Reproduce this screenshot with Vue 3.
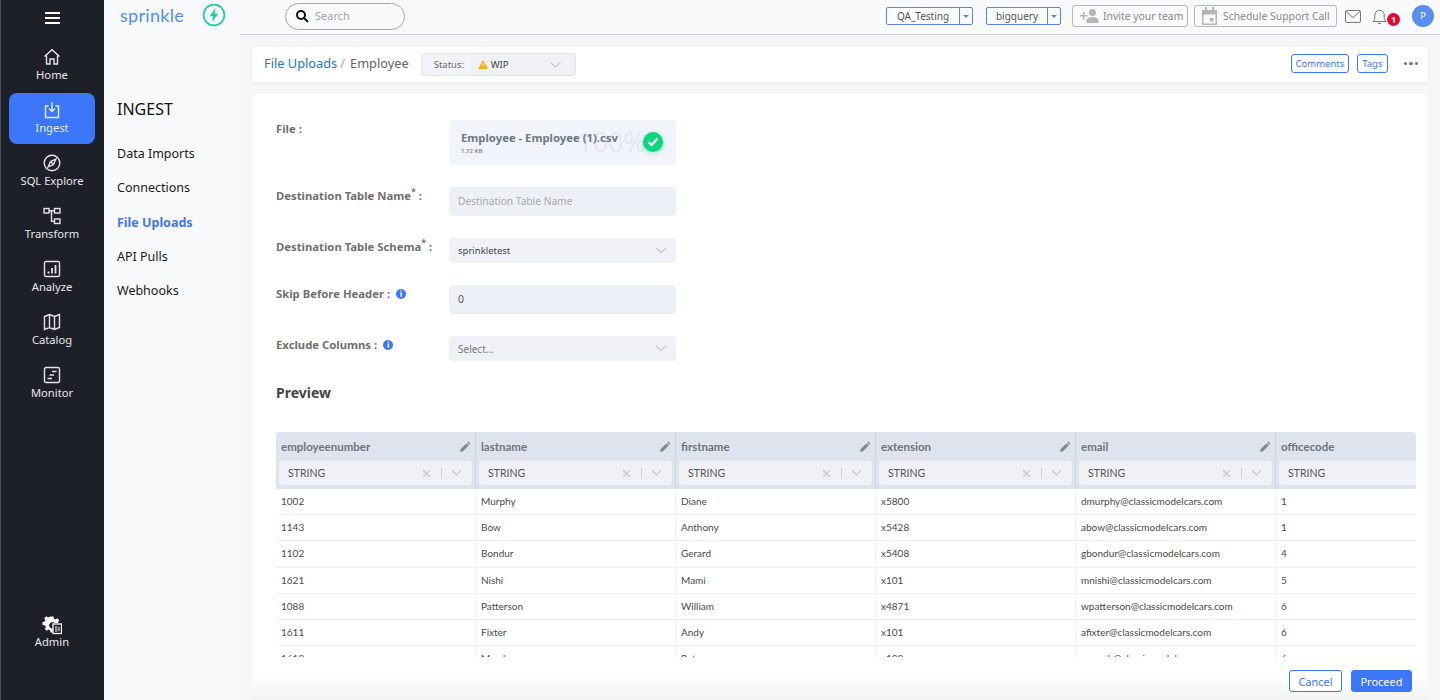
<template>
  <div class="app">
    <aside class="sidebar">
      <div class="burger"><span></span><span></span><span></span></div>
      <a v-for="item in navItems" :key="item.label" class="nav-item" :class="{ active: item.active }">
        <svg width="18" height="18" viewBox="0 0 18 18" fill="none" stroke="currentColor" stroke-width="1.4" v-html="item.icon"></svg>
        <span>{{ item.label }}</span>
      </a>
      <a class="nav-item admin">
        <svg width="20" height="20" viewBox="0 0 20 20">
          <path fill="#fff" d="M8 1h3l.4 2.2 1.5.7 1.9-1.2 2 2-1.2 1.8.3.9H12a3.2 3.2 0 1 0-2 5.600V17H8l-.4-2.200-1.500-.7-1.900 1.200-2-2 1.200-1.900-.6-1.500L0 9.500v-3l2.300-.4.6-1.500-1.200-1.900 2-2 1.900 1.200 1.500-.6z" transform="translate(0.500 0.500)"/>
          <rect x="11" y="9" width="8.500" height="9.500" fill="#1e2029" stroke="#fff" stroke-width="1.300"/>
          <path stroke="#fff" stroke-width="1" d="M13 12h2.500M13 14h2.500M13 16h2.500M17 12v4"/>
        </svg>
        <span>Admin</span>
      </a>
    </aside>

    <nav class="subnav">
      <div class="logo">
        <span class="wordmark">sprinkle</span>
        <svg width="24" height="24" viewBox="0 0 24 24" fill="none">
          <circle cx="12" cy="12" r="10.400" stroke="#1ccfa0" stroke-width="1.700"/>
          <path fill="#1ccfa0" d="M13.600 4.800 7.800 13.200h3.400l-1 6 5.900-8.600h-3.500z"/>
        </svg>
      </div>
      <h2>INGEST</h2>
      <a v-for="link in subLinks" :key="link" :class="{ current: link === 'File Uploads' }">{{ link }}</a>
    </nav>

    <div class="main">
      <header class="topbar">
        <div class="search">
          <svg width="14" height="14" viewBox="0 0 14 14" fill="none" stroke="#111" stroke-width="2"><circle cx="6" cy="6" r="4"/><path d="m9 9 4 4"/></svg>
          <span>Search</span>
        </div>
        <div class="top-right">
          <div class="split qa"><span>QA_Testing</span><i></i></div>
          <div class="split bq"><span>bigquery</span><i></i></div>
          <div class="ghost invite">
            <svg width="20" height="14" viewBox="0 0 20 14" fill="#b5b5b5"><path d="M3 6V3h1.500v3h3v1.500h-3v3H3v-3H0V6z"/><circle cx="12.500" cy="3.500" r="3.500"/><path d="M6.500 14v-2c0-2.500 3-4 6-4s6 1.500 6 4v2z"/></svg>
            <span>Invite your team</span>
          </div>
          <div class="ghost schedule">
            <svg width="15" height="18" viewBox="0 0 15 18" fill="#b5b5b5"><path d="M0 3h3V0h2v3h5V0h2v3h3v15H0zm1.500 4.500V16.500h12V7.500z"/><rect x="8" y="11" width="3.500" height="3.500"/></svg>
            <span>Schedule Support Call</span>
          </div>
          <svg class="mail" width="16" height="13" viewBox="0 0 16 13" fill="none" stroke="#777" stroke-width="1"><rect x=".5" y=".5" width="15" height="12" rx="1.500"/><path d="m1 1.500 7 6 7-6"/></svg>
          <div class="bell">
            <svg width="15" height="17" viewBox="0 0 15 17" fill="none" stroke="#777" stroke-width="1"><path d="M1 13.500c1.200-1 1.800-2 1.800-4.500V7a4.700 4.700 0 0 1 9.400 0v2c0 2.500.6 3.500 1.800 4.500zM6 15.500h3"/></svg>
            <b>1</b>
          </div>
          <div class="avatar">P</div>
        </div>
      </header>

      <div class="content">
        <section class="crumbs">
          <a class="crumb-link">File Uploads</a>
          <span class="slash">/</span>
          <span class="crumb-now">Employee</span>
          <div class="status">
            <span class="status-label">Status:</span>
            <div class="status-value">
              <svg width="10" height="9" viewBox="0 0 10 9"><path fill="#f0b010" d="M5 0 10 9H0z"/><path stroke="#fff" stroke-width="1" d="M5 3v3M5 7v1"/></svg>
              <span>WIP</span>
              <svg class="chev" width="11" height="6" viewBox="0 0 11 6" fill="none" stroke="#c4c7cf" stroke-width="1.200"><path d="m.5.500 5 4.500 5-4.500"/></svg>
            </div>
          </div>
          <div class="crumb-actions">
            <button>Comments</button>
            <button>Tags</button>
            <span class="dots"><i></i><i></i><i></i></span>
          </div>
        </section>

        <section class="card">
          <div class="form">
            <div class="row">
              <label>File :</label>
              <div class="file-box">
                <span class="ghost-pct">100%</span>
                <div class="file-name">Employee - Employee (1).csv</div>
                <div class="file-size">1.72 KB</div>
                <span class="file-ok">
                  <svg width="12" height="10" viewBox="0 0 12 10" fill="none" stroke="#fff" stroke-width="2.400"><path d="m1.500 5 3 3 6-6.500"/></svg>
                </span>
              </div>
            </div>
            <div class="row">
              <label>Destination Table Name<sup>*</sup> :</label>
              <div class="field tall placeholder">Destination Table Name</div>
            </div>
            <div class="row">
              <label>Destination Table Schema<sup>*</sup> :</label>
              <div class="field select schema">
                <span>sprinkletest</span>
                <svg width="12" height="7" viewBox="0 0 12 7" fill="none" stroke="#c4c7cf" stroke-width="1.300"><path d="m1 1 5 4.500L11 1"/></svg>
              </div>
            </div>
            <div class="row">
              <label>Skip Before Header : <em class="info">i</em></label>
              <div class="field tall value">0</div>
            </div>
            <div class="row">
              <label>Exclude Columns : <em class="info">i</em></label>
              <div class="field select muted">
                <span>Select...</span>
                <svg width="12" height="7" viewBox="0 0 12 7" fill="none" stroke="#c4c7cf" stroke-width="1.300"><path d="m1 1 5 4.500L11 1"/></svg>
              </div>
            </div>
          </div>

          <h3>Preview</h3>

          <div class="table-wrap">
            <div class="thead">
              <div v-for="(col, i) in columns" :key="col" class="th">
                <div class="th-top">
                  <span>{{ col }}</span>
                  <svg v-if="i < 5" width="10" height="10" viewBox="0 0 10 10" fill="#888"><path d="M0 10l.7-3L6.500 1.200 8.800 3.500 3 9.300zM7.200.5 8 0a1 1 0 0 1 1.200 0l.8.8a1 1 0 0 1 0 1.200l-.6.700z"/></svg>
                </div>
                <div class="type-select">
                  <span>STRING</span>
                  <template v-if="i < 5">
                    <svg class="x" width="9" height="9" viewBox="0 0 9 9" stroke="#c9ccd4" stroke-width="1.500"><path d="m1 1 7 7M8 1 1 8"/></svg>
                    <i class="sep"></i>
                    <svg width="11" height="6" viewBox="0 0 11 6" fill="none" stroke="#c4c7cf" stroke-width="1.100"><path d="m1 .5 4.500 4.500L10 .5"/></svg>
                  </template>
                </div>
              </div>
            </div>
            <div v-for="row in rows" :key="row[0]" class="tr">
              <div v-for="(cell, j) in row" :key="j" class="td">{{ cell }}</div>
            </div>
          </div>

          <div class="footer">
            <button class="cancel">Cancel</button>
            <button class="proceed">Proceed</button>
          </div>
        </section>
      </div>
    </div>
  </div>
</template>

<script setup>
const navItems = [
  { label: 'Home', icon: '<path d="M1.500 8.500 9 1.800l7.500 6.700M3.500 7.500V16h3.500v-5h4v5h3.500V7.500"/>' },
  { label: 'Ingest', active: true, icon: '<path d="M5.500 5H2.500v11.500h13V5h-3M9 1v9M6 7.500 9 10.500l3-3"/>' },
  { label: 'SQL Explore', icon: '<circle cx="9" cy="9" r="7.800"/><path d="M12.800 5.200 10.500 10.500 5.200 12.800 7.500 7.500z"/><path d="M7.500 7.500 10.500 10.500" />' },
  { label: 'Transform', icon: '<rect x="1" y="1.500" width="5" height="4.500"/><rect x="11.500" y="1.500" width="5.500" height="4.500"/><rect x="11.500" y="12" width="5.500" height="4.500"/><path d="M6 3.700h5.500M8.500 3.700v10.500h3"/>' },
  { label: 'Analyze', icon: '<rect x="1.500" y="1.500" width="15" height="15" rx="1.500"/><path stroke-width="1.800" d="M5.500 13.500v-2M9 13.500V8M12.500 13.500V5"/>' },
  { label: 'Catalog', icon: '<path d="M1.500 3.500 6.500 1.500l5 2 5-2v13l-5 2-5-2-5 2zM6.500 1.500v13M11.500 3.500v13"/>' },
  { label: 'Monitor', icon: '<rect x="1.500" y="1.500" width="15" height="15" rx="1.500"/><path d="M9 5.500h4.500M6.500 9h4.500M4.500 12.500H9"/>' }
]

const subLinks = ['Data Imports', 'Connections', 'File Uploads', 'API Pulls', 'Webhooks']

const columns = ['employeenumber', 'lastname', 'firstname', 'extension', 'email', 'officecode']

const rows = [
  ['1002', 'Murphy', 'Diane', 'x5800', 'dmurphy@classicmodelcars.com', '1'],
  ['1143', 'Bow', 'Anthony', 'x5428', 'abow@classicmodelcars.com', '1'],
  ['1102', 'Bondur', 'Gerard', 'x5408', 'gbondur@classicmodelcars.com', '4'],
  ['1621', 'Nishi', 'Mami', 'x101', 'mnishi@classicmodelcars.com', '5'],
  ['1088', 'Patterson', 'William', 'x4871', 'wpatterson@classicmodelcars.com', '6'],
  ['1611', 'Fixter', 'Andy', 'x101', 'afixter@classicmodelcars.com', '6'],
  ['1612', 'Marsh', 'Peter', 'x102', 'pmarsh@classicmodelcars.com', '6']
]
</script>

<style>
html, body { margin: 0; height: 100%; overflow: hidden; }
</style>

<style scoped>
* { box-sizing: border-box; }

.app {
  display: flex;
  width: 1440px;
  height: 700px;
  overflow: hidden;
  font-family: "Noto Sans", "Open Sans", sans-serif;
  background: #f6f6f7;
}

/* sidebar */
.sidebar {
  width: 104px;
  flex-shrink: 0;
  display: flex;
  flex-direction: column;
  align-items: center;
  background: #1e2029;
  border-left: 1px solid #4a4c52;
}
.burger {
  display: flex;
  flex-direction: column;
  gap: 3px;
  width: 15px;
  margin: 12px 0 14px;
  height: 14px;
}
.burger span { height: 2px; background: #fff; }
.nav-item {
  width: 86px;
  height: 51px;
  margin: 0 0 2px -1px;
  display: flex;
  flex-direction: column;
  align-items: center;
  padding-top: 8px;
  color: #e8e6ec;
  font-size: 11.200px;
  line-height: 17px;
  border-radius: 8px;
}
.nav-item svg { display: block; color: #e4e1e8; }
.nav-item.active { background: #3b76fb; color: #e8eeff; }
.nav-item.active svg { color: #e8eeff; }
.nav-item.admin { margin-top: auto; margin-bottom: 45px; height: 48px; }
.nav-item.admin svg { margin-bottom: -2px; }

/* second column */
.subnav {
  width: 136px;
  flex-shrink: 0;
  padding: 0 0 0 13px;
  background: #f8f9fb;
  display: flex;
  flex-direction: column;
}
.logo {
  display: flex;
  align-items: center;
  height: 30px;
  margin: 0 0 0 3px;
}
.wordmark {
  width: 82px;
  font-family: Lato, sans-serif;
  font-size: 18px;
  letter-spacing: .3px;
  color: #4d8ef5;
  line-height: 30px;
}
.subnav h2 {
  margin: 67px 0 16px;
  font-size: 16px;
  line-height: 24px;
  font-weight: 400;
  color: #111;
}
.subnav a {
  height: 34.300px;
  line-height: 34px;
  font-size: 12.500px;
  color: #1a1a1a;
}
.subnav a.current { color: #3b76fb; font-weight: 700; }

/* top bar */
.main {
  flex: 1;
  min-width: 0;
  display: flex;
  flex-direction: column;
}
.topbar {
  height: 35px;
  flex-shrink: 0;
  display: flex;
  align-items: center;
  padding: 0 6px 2px 45px;
  background: #f8f9fb;
  border-bottom: 1px solid #d3d3d5;
}
.search {
  width: 120px;
  height: 27px;
  display: flex;
  align-items: center;
  gap: 6px;
  padding: 0 0 1px 9px;
  border: 1px solid #a8a8a8;
  border-radius: 14px;
  font-size: 11px;
  color: #a5a5a5;
}
.top-right {
  margin-left: auto;
  display: flex;
  align-items: center;
}
.split {
  height: 18px;
  display: flex;
  border: 1px solid #5b82e8;
  border-radius: 2px;
  font-size: 10px;
  line-height: 16px;
  color: #555;
  background: #fbfcfe;
}
.split span { flex: 1; text-align: center; }
.split i {
  width: 13px;
  border-left: 1px solid #5b82e8;
  position: relative;
}
.split i::after {
  content: "";
  position: absolute;
  left: 3px;
  top: 7px;
  border: 3px solid transparent;
  border-top: 3px solid #5b82e8;
  border-bottom: 0;
}
.qa { width: 87px; margin-right: 13px; }
.bq { width: 75px; margin-right: 11px; }
.ghost {
  height: 22px;
  display: flex;
  align-items: center;
  gap: 3px;
  padding-left: 7px;
  border: 1px solid #b5b5b5;
  border-radius: 3px;
  font-size: 10.400px;
  color: #8a8a8a;
  white-space: nowrap;
}
.invite { width: 116px; margin-right: 6px; }
.schedule { width: 143px; margin-right: 8px; gap: 6px; }
.mail { margin-right: 11px; }
.bell { position: relative; width: 18px; height: 20px; margin-right: 22px; padding-top: 2px; }
.bell b {
  position: absolute;
  left: 15px;
  top: 7px;
  width: 13px;
  height: 13px;
  border-radius: 50%;
  background: #e8062f;
  color: #fff;
  font-size: 9px;
  line-height: 13px;
  text-align: center;
}
.avatar {
  width: 22px;
  height: 22px;
  border-radius: 50%;
  background: #5b8def;
  color: #fff;
  font-size: 9px;
  line-height: 22px;
  text-align: center;
}

/* content */
.content {
  flex: 1;
  min-height: 0;
  display: flex;
  flex-direction: column;
  gap: 12px;
  padding: 12px 12px 0;
}
.crumbs {
  height: 35px;
  flex-shrink: 0;
  display: flex;
  align-items: center;
  padding: 0 10px 0 12px;
  background: #fff;
  box-shadow: 0 1px 3px rgba(0, 0, 0, .05);
  font-size: 12.800px;
}
.crumb-link { color: #2878b8; margin-bottom: 3px; }
.slash { color: #aaa; margin: 0 5px 3px 3px; }
.crumb-now { color: #666; margin-bottom: 3px; }
.status {
  width: 155px;
  height: 23px;
  margin-left: 12px;
  display: flex;
  align-items: center;
  border: 1px solid #e2e4ea;
  border-radius: 3px;
  background: #f2f3f7;
  font-size: 9.500px;
  color: #666;
}
.status-label { width: 48px; padding-left: 12px; }
.status-value {
  flex: 1;
  display: flex;
  align-items: center;
  gap: 3px;
  padding-left: 8px;
  color: #444;
  height: 100%;
  background: #f0f1f5;
}
.status-value .chev { margin: 1px 14px 0 auto; }
.crumb-actions {
  margin-left: auto;
  display: flex;
  align-items: center;
  gap: 8px;
  margin-bottom: 2px;
}
.crumb-actions button {
  height: 19px;
  padding: 0 4px;
  border: 1px solid #3b76fb;
  border-radius: 3px;
  background: #fff;
  color: #3b76fb;
  font: 9.500px "Noto Sans", sans-serif;
}
.dots { display: flex; gap: 2px; margin-left: 8px; }
.dots i { width: 3.500px; height: 3.500px; border-radius: 50%; background: #777; }

.card {
  flex: 1;
  min-height: 0;
  display: flex;
  flex-direction: column;
  padding: 26px 12px 0 24px;
  background: #fff;
  background-image: linear-gradient(to bottom, transparent 580px, #f3f3f4 606px);
}
.form { display: flex; flex-direction: column; gap: 22px; }
.row { display: flex; align-items: flex-start; }
.row label {
  width: 173px;
  font-size: 11.300px;
  line-height: 17px;
  font-weight: 700;
  color: #707070;
}
.row label sup { font-size: 9px; line-height: 0; }
.info {
  display: inline-block;
  width: 10px;
  height: 10px;
  margin-left: 3px;
  border-radius: 50%;
  background: #3b76fb;
  color: #fff;
  font: 700 8px/10px "Noto Sans", sans-serif;
  text-align: center;
  vertical-align: 1px;
}
.file-box {
  position: relative;
  width: 227px;
  height: 45px;
  padding: 9px 0 0 12px;
  border-radius: 4px;
  background: #f2f4fb;
}
.ghost-pct {
  position: absolute;
  right: 30px;
  top: 4px;
  font-size: 27px;
  line-height: 36px;
  color: #e5e8f1;
}
.file-name {
  position: relative;
  font-size: 11.300px;
  line-height: 18px;
  font-weight: 700;
  color: #6d7785;
  white-space: nowrap;
}
.file-size {
  position: relative;
  font-size: 6px;
  line-height: 9px;
  font-weight: 600;
  color: #7d8592;
}
.file-ok {
  position: absolute;
  left: 194px;
  top: 12px;
  width: 20px;
  height: 20px;
  display: flex;
  align-items: center;
  justify-content: center;
  border-radius: 50%;
  background: #0bd67f;
  box-shadow: 0 1px 5px rgba(11, 214, 127, .45);
}
.field {
  width: 227px;
  border-radius: 4px;
  background: #eef0f8;
  font-size: 10.200px;
  color: #444;
}
.tall { height: 29px; line-height: 28px; padding-left: 9px; }
.placeholder { color: #a8a8ac; }
.value { font-size: 10.500px; color: #555; }
.select {
  height: 25px;
  display: flex;
  align-items: center;
  justify-content: space-between;
  padding: 0 9px;
  background: #f0f1f6;
}
.schema { font-size: 9.500px; }
.muted { color: #777; font-size: 10px; }

h3 {
  margin: 22px 0 29px;
  font-size: 14px;
  line-height: 20px;
  font-weight: 700;
  color: #444;
}

/* table */
.table-wrap {
  width: 1140px;
  height: 225px;
  flex-shrink: 0;
  overflow: hidden;
  font-family: Lato, sans-serif;
}
.thead {
  display: flex;
  height: 57px;
  border-radius: 4px 4px 0 0;
  background: #dfe3ee;
}
.th {
  width: 200px;
  flex-shrink: 0;
  padding: 0 3px;
  border-right: 1px solid #cfd4e2;
}
.th:last-child { border-right: 0; }
.th-top {
  height: 29px;
  display: flex;
  align-items: center;
  justify-content: space-between;
  padding: 0 2px;
  font-size: 11.500px;
  font-weight: 700;
  color: #707478;
}
.type-select {
  width: 193px;
  height: 24px;
  display: flex;
  align-items: center;
  padding: 0 10px 0 9px;
  border-radius: 3px;
  background: #eff1f7;
  font-size: 10.500px;
  color: #555;
}
.type-select .x { margin-left: auto; }
.sep { width: 1px; height: 11px; margin: 0 9px 0 10px; background: #cfd2da; }
.tr {
  display: flex;
  height: 26.200px;
  border-bottom: 1px solid #eeeff2;
}
.td {
  width: 200px;
  flex-shrink: 0;
  padding-left: 5px;
  border-right: 1px solid #f1f2f5;
  font-size: 10px;
  line-height: 25px;
  color: #4a4a4a;
}
.td:last-child { border-right: 0; }

.footer {
  display: flex;
  justify-content: flex-end;
  gap: 9px;
  margin-top: 13px;
  padding-right: 4px;
}
.footer button {
  height: 22px;
  border-radius: 3px;
  font: 11px "Noto Sans", sans-serif;
  padding: 0;
}
.cancel { width: 53px; border: 1px solid #3b76fb; background: #fff; color: #3b76fb; }
.proceed { width: 61px; border: 1px solid #3b76fb; background: #3b76fb; color: #fff; }
</style>
